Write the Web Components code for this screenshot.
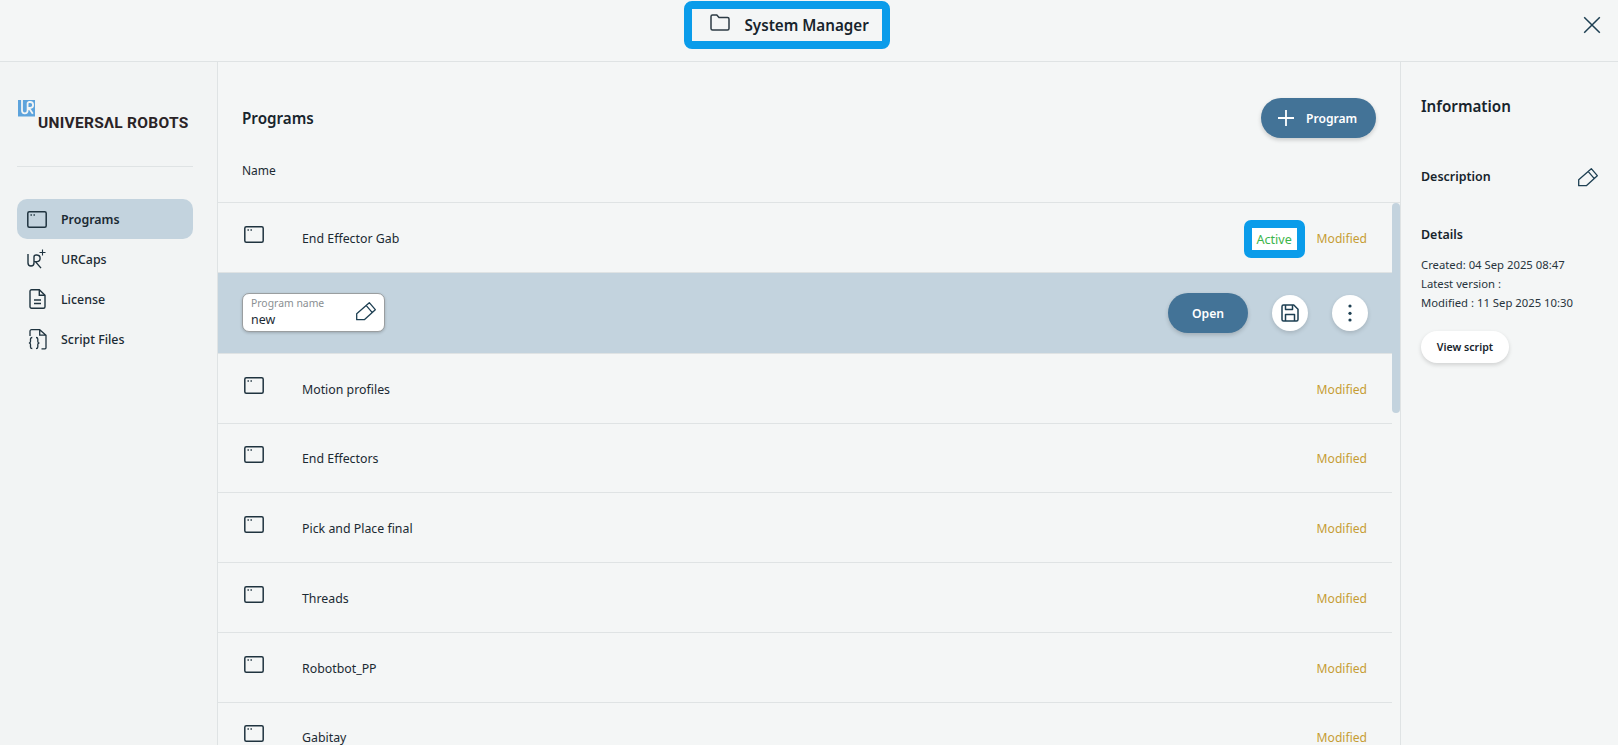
<!DOCTYPE html>
<html><head><meta charset="utf-8">
<style>
html,body{margin:0;padding:0;height:100%;overflow:hidden;background:#f4f6f6;font-family:"Noto Sans",sans-serif;color:#1b2a33}
</style></head><body>
<sm-app></sm-app>
<script>
const PEN=`<svg width="20" height="19" viewBox="0 0 20 19" fill="none" stroke="#1d3f52" stroke-width="1.300" stroke-linejoin="round"><path d="M.7 11.700 13.300.7l6 7L8.300 17.700H.7zM10.300 3.600l6 7"/></svg>`;
const I={
 win:`<svg width="20" height="17" viewBox="0 0 20 17" fill="none" stroke="#1f333f" stroke-width="1.500"><rect x=".8" y=".8" width="18.400" height="15.400" rx="1.500"/><path d="M3.500 4h1.400M6.500 4h1.400" stroke-width="1.400"/></svg>`,
 ur:`<svg width="20" height="20" viewBox="0 0 20 20" fill="none" stroke="#1f333f" stroke-width="1.400"><path d="M1 5v9a3 3 0 0 0 6 0V8c0-1.500.8-2 2-2h.8a3.200 3.200 0 0 1 0 6.600H8.500l5.500 6.500"/><path d="M15.500.5v6M12.500 3.500h6" stroke-width="1.100"/></svg>`,
 doc:`<svg width="17" height="20" viewBox="0 0 17 20" fill="none" stroke="#1f333f" stroke-width="1.400"><path d="M1 2.200A1.500 1.500 0 0 1 2.500.7h7.800L16 6.300v11.500a1.500 1.500 0 0 1-1.500 1.500h-12A1.500 1.500 0 0 1 1 17.800z"/><path d="M10.300.7v5.600H16M5 11h7M5 14.500h7"/></svg>`,
 script:`<svg width="19" height="21" viewBox="0 0 19 21" fill="none" stroke="#1f333f" stroke-width="1.300"><path d="M2 7V2.200A1.500 1.500 0 0 1 3.500.7h8.200L18 6.200v12.600a1 1 0 0 1-1 1h-3.500M11.700.7v5.500H18"/><path d="M4.300 8.500c-1.200 0-1.800.5-1.800 1.600v2.400c0 .9-.5 1.500-1.600 1.500 1.100 0 1.600.6 1.600 1.500v2.400c0 1.100.6 1.600 1.800 1.600M8 8.500c1.200 0 1.800.5 1.800 1.600v2.400c0 .9.500 1.500 1.600 1.500-1.100 0-1.600.6-1.600 1.500v2.400c0 1.100-.6 1.600-1.800 1.600"/></svg>`,
 pen:PEN,
 folder:`<svg width="20" height="17" viewBox="0 0 20 17" fill="none" stroke="#2c3b44" stroke-width="1.500"><path d="M1 2.500A1.500 1.500 0 0 1 2.500 1h4.300l2.200 2.600h8.500A1.500 1.500 0 0 1 19 5.100v9.400a1.500 1.500 0 0 1-1.500 1.500h-15A1.500 1.500 0 0 1 1 14.500z"/></svg>`,
 close:`<svg width="18" height="18" viewBox="0 0 18 18" fill="none" stroke="#1d3f52" stroke-width="1.500"><path d="M1.200 1.200l15.600 15.600M16.800 1.200 1.200 16.800"/></svg>`,
 plus:`<svg width="16" height="16" viewBox="0 0 16 16" fill="none" stroke="#fff" stroke-width="1.800"><path d="M8 0v16M0 8h16"/></svg>`,
 save:`<svg width="18" height="18" viewBox="0 0 18 18" fill="none" stroke="#1d3f52" stroke-width="1.500" stroke-linejoin="round"><path d="M1 2.500A1.500 1.500 0 0 1 2.500 1h10.300L17 5.200v10.300a1.500 1.500 0 0 1-1.500 1.500h-13A1.500 1.500 0 0 1 1 15.500z"/><path d="M4.500 1v4.500h7V1M4.500 17v-6.500h9V17"/></svg>`,
 dots:`<svg width="4" height="18" viewBox="0 0 4 18" fill="#1d3f52"><circle cx="2" cy="2" r="1.600"/><circle cx="2" cy="9.300" r="1.600"/><circle cx="2" cy="16" r="1.600"/></svg>`,
};
function def(name,css,html,extra){
 const t=document.createElement('template');
 t.innerHTML=`<style>${css}</style>${html}`;
 customElements.define(name,class extends HTMLElement{
  constructor(){super();this.attachShadow({mode:'open'}).appendChild(t.content.cloneNode(true));}
  connectedCallback(){extra&&extra.call(this,this.shadowRoot)}
 });
}
def('sm-header',`:host{display:flex;align-items:flex-start;justify-content:center;height:62px;box-sizing:border-box;border-bottom:1px solid #dfe3e4;position:relative;flex:none}
 .t{display:flex;align-items:center;box-sizing:border-box;width:206px;height:48px;margin:1px 0 0 -45px;border:8px solid #0a9cea;border-radius:8px;padding-left:18px;gap:15px;font-size:15.200px;font-weight:600;color:#17242c}
 .t svg{margin-top:-5px}
 .x{position:absolute;right:17px;top:16px;display:flex}`,
 `<div class="t">${I.folder}<span>System Manager</span></div><div class="x">${I.close}</div>`);
def('sm-nav-item',`:host{display:flex;align-items:center;height:40px;border-radius:10px;padding-left:10px;font-size:12.400px;font-weight:500;color:#1b2a33}
 :host([active]){background:#c3d3de;font-weight:600}
 .i{width:20px;display:flex;justify-content:center;margin-right:14px}`,
 `<span class="i"><slot name="icon"></slot></span><slot></slot>`);
def('sm-sidebar',`:host{display:block;width:218px;box-sizing:border-box;border-right:1px solid #dfe3e4;background:#f2f4f4;padding:0 24px 0 17px;flex:none}
 .logo{position:relative;height:105px;box-sizing:border-box;padding-top:52px;border-bottom:1px solid #dfe3e4}
 .logo svg{position:absolute;left:1px;top:38px}
 .name{padding-left:21px;font:700 15.500px/18px Roboto,sans-serif;letter-spacing:.28px;color:#2a2326;white-space:nowrap}
 nav{margin-top:32px}`,
 `<div class="logo"><svg width="18" height="17" viewBox="0 0 18 17"><rect width="17" height="16.500" fill="#5da3dc"/><path d="M4 0v10.500a2.800 2.800 0 0 0 5.600 0V3.500c0-1 .8-1.500 1.600-1.500h1a2.800 2.800 0 0 1 0 5.800h-1.400l4 6" fill="none" stroke="#f2f4f4" stroke-width="1.800"/></svg><div class="name">UNIVERSΛL ROBOTS</div></div>
 <nav><slot></slot></nav>`);
def('sm-row',`:host{display:flex;align-items:center;height:69.750px;box-sizing:border-box;border-bottom:1px solid #dfe3e4;padding:2px 25px 0 26px;font-size:12.350px;color:#1b2a33;flex:none}
 .i{display:flex;margin-top:-8px;margin-right:38px}
 .sp{flex:1}
 .m{color:#c69d33;margin-left:12px;white-space:nowrap;font-size:12.100px}
 .a{display:flex;align-items:center;justify-content:center;width:61px;height:38px;margin-top:2px;border:8px solid #0a9cea;border-radius:7px;box-sizing:border-box;background:#fff;color:#3cb54a;font-size:12.600px}`,
 `<span class="i">${I.win}</span><slot></slot><span class="sp"></span><slot name="badge"></slot><span class="m">Modified</span>`,
 function(r){ if(this.hasAttribute('active')){const d=document.createElement('span');d.className='a';d.textContent='Active';r.querySelector('.m').before(d);} });
def('sm-selected',`:host{display:flex;align-items:center;height:81px;box-sizing:border-box;background:#c3d3de;padding:0 24px;flex:none;border-bottom:1px solid #dfe3e4}
 .f{width:143px;height:39px;box-sizing:border-box;background:#fff;border:1px solid #9a9ea0;border-radius:7px;box-shadow:0 1px 3px rgba(0,0,0,.2);padding:2px 8px;position:relative;font-size:12.400px;line-height:17px}
 .f small{display:block;font-size:10.400px;line-height:15px;color:#8a8f92}
 .f svg{position:absolute;right:8px;top:8px}
 .sp{flex:1}
 .o{width:80px;height:40px;padding-top:1px;box-sizing:border-box;border-radius:20px;background:#437397;color:#fff;font-weight:600;font-size:12.200px;display:flex;align-items:center;justify-content:center;box-shadow:0 2px 4px rgba(0,0,0,.18)}
 .c{width:36px;height:36px;border-radius:50%;background:#fff;display:flex;align-items:center;justify-content:center;box-shadow:0 2px 4px rgba(0,0,0,.15);margin-left:24px}`,
 `<div class="f"><small>Program name</small>new${I.pen}</div><span class="sp"></span><div class="o">Open</div><div class="c">${I.save}</div><div class="c">${I.dots}</div>`);
def('sm-main',`:host{display:flex;flex-direction:column;flex:1;min-width:0;position:relative;overflow:hidden;border-right:1px solid #dfe3e4}
 .top{display:flex;align-items:flex-start;justify-content:space-between;height:141px;box-sizing:border-box;border-bottom:1px solid #dfe3e4;padding:36px 24px 0 24px;position:relative;flex:none}
 h2{margin:9px 0 0;font-size:15.200px;line-height:22px;font-weight:600;color:#17242c}
 .n{position:absolute;left:24px;top:100px;font-size:12px;font-weight:400;line-height:18px}
 .b{width:115px;height:40px;box-sizing:border-box;padding-left:17px;border-radius:20px;background:#437397;color:#fff;display:flex;align-items:center;gap:12px;font-weight:600;font-size:12.100px;box-shadow:0 2px 4px rgba(0,0,0,.18)}
 .list{flex:1;display:flex;flex-direction:column;padding-right:8px}
 .sb{position:absolute;right:0;top:141px;width:8px;height:210px;background:#c3d3de;border-radius:4px}`,
 `<div class="top"><h2>Programs</h2><span class="n">Name</span><div class="b">${I.plus}<span>Program</span></div></div><div class="list"><slot></slot></div><div class="sb"></div>`);
def('sm-info',`:host{display:block;width:217px;box-sizing:border-box;padding:33px 0 0 20px;flex:none;position:relative}
 h2{margin:0;font-size:15.200px;line-height:22px;font-weight:600;color:#17242c}
 h3{margin:0;font-size:12.450px;line-height:18px;font-weight:600;color:#17242c}
 .d{display:flex;justify-content:space-between;align-items:center;margin-top:48px;padding-right:20px;height:24px}
 .de{margin-top:37px}
 p{margin:10.500px 0 0;font-size:11.300px;line-height:19px;color:#27343c}
 .v{margin-top:19.500px;width:88px;height:32px;border-radius:16px;background:#fff;display:flex;align-items:center;justify-content:center;font-size:10.600px;font-weight:600;box-shadow:0 2px 4px rgba(0,0,0,.15);color:#17242c}`,
 `<h2>Information</h2><div class="d"><h3>Description</h3>${I.pen}</div><h3 class="de">Details</h3><p>Created: 04 Sep 2025 08:47<br>Latest version :<br>Modified : 11 Sep 2025 10:30</p><div class="v">View script</div>`);
def('sm-app',`:host{display:flex;flex-direction:column;height:745px;overflow:hidden}.b{display:flex;flex:1;min-height:0}`,
 `<sm-header></sm-header><div class="b"><sm-sidebar>
 <sm-nav-item active><span slot="icon" style="display:flex">${I.win}</span>Programs</sm-nav-item>
 <sm-nav-item><span slot="icon" style="display:flex">${I.ur}</span>URCaps</sm-nav-item>
 <sm-nav-item><span slot="icon" style="display:flex">${I.doc}</span>License</sm-nav-item>
 <sm-nav-item><span slot="icon" style="display:flex">${I.script}</span>Script Files</sm-nav-item>
 </sm-sidebar><sm-main>
 <sm-row active>End Effector Gab</sm-row><sm-selected></sm-selected>
 <sm-row>Motion profiles</sm-row><sm-row>End Effectors</sm-row><sm-row>Pick and Place final</sm-row><sm-row>Threads</sm-row><sm-row>Robotbot_PP</sm-row><sm-row>Gabitay</sm-row>
 </sm-main><sm-info></sm-info></div>`);
</script>
</body></html>
